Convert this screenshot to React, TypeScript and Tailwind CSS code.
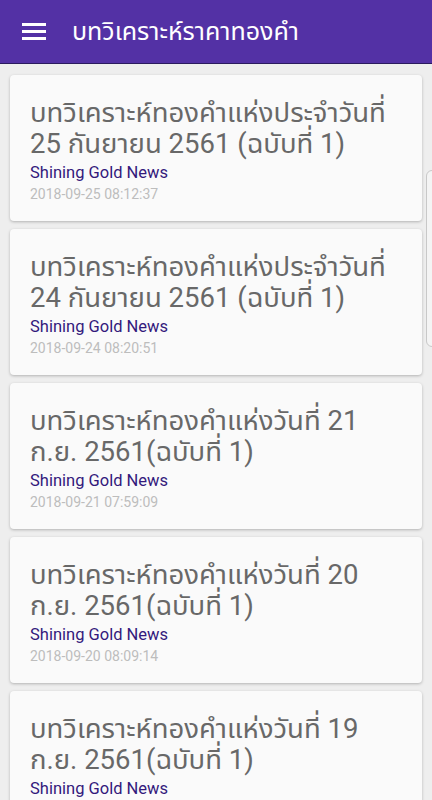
const posts = [
  { title: "บทวิเคราะห์ทองคำแห่งประจำวันที่ 25 กันยายน 2561 (ฉบับที่ 1)", date: "2018-09-25 08:12:37" },
  { title: "บทวิเคราะห์ทองคำแห่งประจำวันที่ 24 กันยายน 2561 (ฉบับที่ 1)", date: "2018-09-24 08:20:51" },
  { title: "บทวิเคราะห์ทองคำแห่งวันที่ 21 ก.ย. 2561(ฉบับที่ 1)", date: "2018-09-21 07:59:09" },
  { title: "บทวิเคราะห์ทองคำแห่งวันที่ 20 ก.ย. 2561(ฉบับที่ 1)", date: "2018-09-20 08:09:14" },
  { title: "บทวิเคราะห์ทองคำแห่งวันที่ 19 ก.ย. 2561(ฉบับที่ 1)", date: "2018-09-19 08:05:22" },
];

export default function App() {
  return (
    <div
      className="relative h-[800px] w-[432px] overflow-hidden bg-[#eeeeee]"
      style={{ fontFamily: '"Roboto", "Noto Sans", "Noto Sans Thai", sans-serif' }}
    >
      <header className="flex h-16 items-center border-b border-[#2a1a5e] bg-[#5331a5] text-white">
        <button className="ml-[22px] flex w-6 flex-col gap-[4px]">
          <span className="h-[3px] w-6 bg-white" />
          <span className="h-[3px] w-6 bg-white" />
          <span className="h-[3px] w-6 bg-white" />
        </button>
        <h1 className="ml-[26px] text-[25px] leading-none">บทวิเคราะห์ราคาทองคำ</h1>
      </header>

      <main className="flex flex-col gap-2 px-[10px] pt-[11px]">
        {posts.map((p) => (
          <article
            key={p.date}
            className="h-[146px] shrink-0 rounded-[4px] bg-[#fafafa] px-5 pt-[22px] shadow-[0_1px_3px_rgba(0,0,0,0.25)]"
          >
            <h2 className="text-[27.5px] leading-[31px] text-[#686868]">{p.title}</h2>
            <p className="mt-[4px] text-[16.5px] leading-[20px] text-[#33197c]">Shining Gold News</p>
            <p className="mt-[1px] text-[14px] leading-[20px] text-[#bdbdbd]">{p.date}</p>
          </article>
        ))}
      </main>

      <div className="absolute right-[-6px] top-[170px] h-[177px] w-[12px] rounded-l-[6px] border border-[#c8c8c8] bg-[#f4f4f4]" />
    </div>
  );
}
